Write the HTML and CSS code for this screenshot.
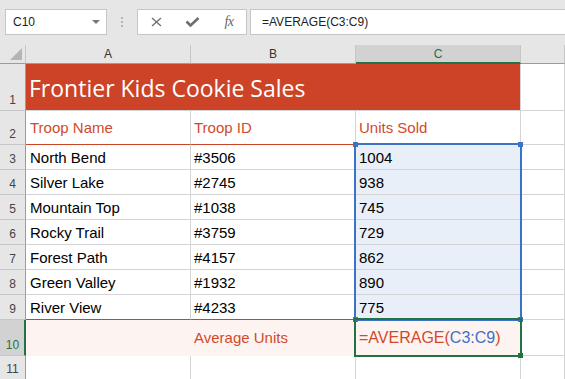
FILE: index.html
```html
<!DOCTYPE html>
<html>

<head>
    <title>Frontier Kids Cookie Sales</title>
    <link rel="stylesheet" href="styles.css">
</head>

<body>
    <div class="toolbar">
        <div class="namebox">
            <span>C10</span>
            <span class="caret"></span>
        </div>
        <div class="grip">
            <span></span><span></span><span></span>
        </div>
        <div class="fbuttons">
            <div class="slot">
                <svg width="11" height="10" viewBox="0 0 11 10">
                    <path d="M1 1 L10 9 M10 1 L1 9" stroke="#707070" stroke-width="1.4" fill="none" />
                </svg>
            </div>
            <div class="slot">
                <svg width="15" height="10" viewBox="0 0 15 10">
                    <path d="M1.5 4.5 L5.5 8.5 L13.5 1" stroke="#6e6e6e" stroke-width="2.6" fill="none" />
                </svg>
            </div>
            <div class="slot"><span class="fx">fx</span></div>
        </div>
        <div class="formula">=AVERAGE(C3:C9)</div>
    </div>

    <div class="sheet">
        <!-- column headers -->
        <div class="row">
            <div class="corner"><span class="tri"></span></div>
            <div class="colhead">A</div>
            <div class="colhead">B</div>
            <div class="colhead on">C</div>
            <div class="colhead"></div>
        </div>

        <div class="row">
            <div class="rowhead">1</div>
            <div class="cell title">Frontier Kids Cookie Sales</div>
            <div class="cell"></div>
        </div>

        <div class="row">
            <div class="rowhead">2</div>
            <div class="cell head">Troop Name</div>
            <div class="cell head">Troop ID</div>
            <div class="cell head">Units Sold</div>
            <div class="cell"></div>
        </div>

        <div class="row">
            <div class="rowhead">3</div>
            <div class="cell">North Bend</div>
            <div class="cell">#3506</div>
            <div class="cell sel">1004</div>
            <div class="cell"></div>
        </div>

        <div class="row">
            <div class="rowhead">4</div>
            <div class="cell">Silver Lake</div>
            <div class="cell">#2745</div>
            <div class="cell sel">938</div>
            <div class="cell"></div>
        </div>

        <div class="row">
            <div class="rowhead">5</div>
            <div class="cell">Mountain Top</div>
            <div class="cell">#1038</div>
            <div class="cell sel">745</div>
            <div class="cell"></div>
        </div>

        <div class="row">
            <div class="rowhead">6</div>
            <div class="cell">Rocky Trail</div>
            <div class="cell">#3759</div>
            <div class="cell sel">729</div>
            <div class="cell"></div>
        </div>

        <div class="row">
            <div class="rowhead">7</div>
            <div class="cell">Forest Path</div>
            <div class="cell">#4157</div>
            <div class="cell sel">862</div>
            <div class="cell"></div>
        </div>

        <div class="row">
            <div class="rowhead">8</div>
            <div class="cell">Green Valley</div>
            <div class="cell">#1932</div>
            <div class="cell sel">890</div>
            <div class="cell"></div>
        </div>

        <div class="row">
            <div class="rowhead">9</div>
            <div class="cell last">River View</div>
            <div class="cell last">#4233</div>
            <div class="cell last sel">775</div>
            <div class="cell"></div>
        </div>

        <div class="row">
            <div class="rowhead on">10</div>
            <div class="cell total"></div>
            <div class="cell total head">Average Units</div>
            <div class="cell total edit">=AVERAGE(<span class="ref">C3:C9</span>)</div>
            <div class="cell"></div>
        </div>

        <div class="row">
            <div class="rowhead">11</div>
            <div class="cell"></div>
            <div class="cell"></div>
            <div class="cell"></div>
            <div class="cell"></div>
        </div>

        <!-- selection overlays -->
        <div class="range">
            <span class="handle tl"></span>
            <span class="handle tr"></span>
            <span class="handle bl"></span>
            <span class="handle br"></span>
        </div>
        <div class="active">
            <span class="handle br"></span>
        </div>
    </div>
</body>

</html>
```

FILE: styles.css
```css
* {
    padding: 0;
    margin: 0;
    box-sizing: border-box;
}

body {
    background-color: #ffffff;
    font-family: "Liberation Sans", Arial, sans-serif;
    width: 565px;
    height: 379px;
    overflow: hidden;
}

/* formula bar */
.toolbar {
    height: 45px;
    background-color: #e6e6e6;
    display: flex;
    align-items: flex-start;
    padding: 9px 0 0 5px;
}

.namebox {
    width: 102px;
    height: 26px;
    background-color: white;
    border: 1px solid #c6c6c6;
    display: flex;
    align-items: center;
    justify-content: space-between;
    padding: 0 6px 0 7px;
    font-size: 12px;
    color: #222;
}

.caret {
    width: 0;
    height: 0;
    border-left: 4px solid transparent;
    border-right: 4px solid transparent;
    border-top: 4px solid #777;
}

.grip {
    width: 30px;
    height: 26px;
    display: flex;
    flex-direction: column;
    align-items: center;
    padding-top: 8px;
    gap: 2px;
}

.grip span {
    width: 2px;
    height: 2px;
    background-color: #b3b3b3;
}

.fbuttons {
    width: 110px;
    height: 26px;
    background-color: white;
    border: 1px solid #c6c6c6;
    display: flex;
}

.slot {
    width: 36px;
    display: flex;
    align-items: center;
    justify-content: center;
}

.fx {
    font-family: "Liberation Serif", serif;
    font-style: italic;
    font-size: 14px;
    color: #666;
    letter-spacing: -0.5px;
    padding-left: 2px;
}

.formula {
    flex: 1;
    height: 26px;
    margin-left: 3px;
    background-color: white;
    border: 1px solid #c6c6c6;
    border-right: none;
    display: flex;
    align-items: center;
    padding-left: 11px;
    font-size: 12px;
    color: #222;
}

/* grid */
.sheet {
    display: grid;
    grid-template-columns: 26px 165px 165px 165px 1fr;
    grid-template-rows: 19px 47px 34px repeat(7, 25px) 36px 24px;
}

.row {
    display: contents;
}

.row:nth-child(1) > * { grid-row: 1; }
.row:nth-child(2) > * { grid-row: 2; }
.row:nth-child(3) > * { grid-row: 3; }
.row:nth-child(4) > * { grid-row: 4; }
.row:nth-child(5) > * { grid-row: 5; }
.row:nth-child(6) > * { grid-row: 6; }
.row:nth-child(7) > * { grid-row: 7; }
.row:nth-child(8) > * { grid-row: 8; }
.row:nth-child(9) > * { grid-row: 9; }
.row:nth-child(10) > * { grid-row: 10; }
.row:nth-child(11) > * { grid-row: 11; }
.row:nth-child(12) > * { grid-row: 12; }

.row > :nth-child(1) { grid-column: 1; }
.row > :nth-child(2) { grid-column: 2; padding-left: 4px; }
.row > :nth-child(3) { grid-column: 3; }
.row > :nth-child(4) { grid-column: 4; }
.row > :nth-child(5) { grid-column: 5; }

.row > .title { grid-column: 2 / 5; }
.row > .title + .cell { grid-column: 5; }

.corner {
    background-color: #e6e6e6;
    border-right: 1px solid #c6c6c6;
    border-bottom: 1px solid #9b9b9b;
    display: flex;
    justify-content: flex-end;
    align-items: flex-end;
    padding: 0 3px 3px 0;
}

.tri {
    width: 0;
    height: 0;
    border-left: 12px solid transparent;
    border-bottom: 12px solid #b4b4b4;
}

.colhead {
    background-color: #e6e6e6;
    border-right: 1px solid #c6c6c6;
    border-bottom: 1px solid #9b9b9b;
    font-size: 12px;
    color: #333;
    text-align: center;
    line-height: 18px;
}

.row > .colhead {
    padding-left: 0;
}

.colhead.on {
    background-color: #d2d2d2;
    color: #217346;
    border-bottom: 2px solid #217346;
}

.rowhead {
    background-color: #e6e6e6;
    border-right: 1px solid #9b9b9b;
    border-bottom: 1px solid #c6c6c6;
    font-size: 12px;
    color: #444;
    display: flex;
    align-items: flex-end;
    justify-content: center;
    padding-bottom: 3px;
}

.rowhead.on {
    background-color: #d2d2d2;
    color: #217346;
    border-right: 2px solid #217346;
    padding-left: 1px;
}

.cell {
    border-right: 1px solid #d4d4d4;
    border-bottom: 1px solid #d4d4d4;
    font-size: 15px;
    color: #000;
    display: flex;
    align-items: center;
    padding: 0 3px;
    white-space: nowrap;
    overflow: hidden;
}

.title {
    background-color: #cc4328;
    color: white;
    font-family: "Open Sans", sans-serif;
    font-size: 23px;
    padding-top: 1px;
}

.row > .title {
    padding-left: 3px;
}

.head {
    color: #d24a2b;
    border-bottom-color: #cc4328;
}

.last {
    border-bottom-color: #cc4328;
}

.sel {
    background-color: #e8eff9;
}

.total {
    background-color: #fdf3f1;
    border-color: #fdf3f1;
}

.edit {
    color: #d24a2b;
    font-size: 16px;
}

.ref {
    color: #3b72c6;
}

/* selection */
.range {
    grid-column: 4 / 5;
    grid-row: 4 / 11;
    margin: -2px -1px -1px -2px;
    border: 2px solid #3b72c6;
    position: relative;
    pointer-events: none;
}

.active {
    grid-column: 4 / 5;
    grid-row: 11 / 12;
    margin: -2px -1px -1px -2px;
    border: 2px solid #217346;
    position: relative;
    pointer-events: none;
}

.handle {
    position: absolute;
    width: 5px;
    height: 5px;
    background-color: #3b72c6;
}

.active .handle {
    background-color: #217346;
}

.tl { top: -3px; left: -3px; }
.tr { top: -3px; right: -3px; }
.bl { bottom: -3px; left: -3px; }
.br { bottom: -3px; right: -3px; }
```
